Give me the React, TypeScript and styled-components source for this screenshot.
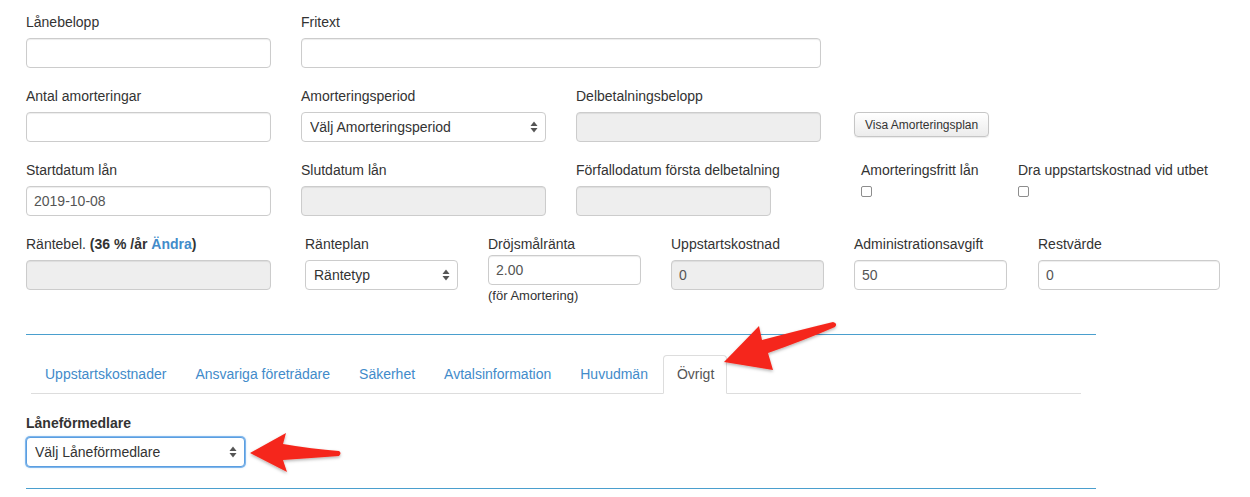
import React from 'react'
import styled, { createGlobalStyle, css } from 'styled-components'

const GlobalStyle = createGlobalStyle`
  body {
    margin: 0;
    background: #fff;
    font-family: "Liberation Sans", Arial, sans-serif;
    font-size: 14px;
    color: #333;
  }
`

const Page = styled.div`
  position: relative;
  width: 1250px;
  height: 497px;
  padding: 13px 0 0 26px;
  box-sizing: border-box;
  overflow: hidden;
`

const Row = styled.div`
  display: flex;
  align-items: flex-start;
  margin-bottom: 19px;
`

const Field = styled.div<{ $w?: number; $ml?: number }>`
  width: ${(p) => (p.$w ? `${p.$w}px` : 'auto')};
  margin-left: ${(p) => p.$ml || 0}px;
  flex-shrink: 0;
`

const Label = styled.div<{ $tight?: boolean }>`
  line-height: 18px;
  margin-bottom: ${(p) => (p.$tight ? 2 : 7)}px;
  white-space: nowrap;
`

const BoldLabel = styled(Label)`
  font-weight: 700;
  line-height: 17px;
  margin-bottom: 5px;
`

const Strong = styled.b`
  font-weight: 700;
`

const Link = styled.a`
  color: #428bca;
  font-weight: 700;
  text-decoration: none;
`

const controlBase = css`
  display: block;
  width: 100%;
  height: 30px;
  box-sizing: border-box;
  padding: 5px 7px;
  font-family: inherit;
  font-size: 14px;
  color: #555;
  background: #fff;
  border: 1px solid #ccc;
  border-radius: 4px;
  box-shadow: inset 0 1px 1px rgba(0, 0, 0, 0.075);
  outline: none;
`

const Input = styled.input`
  ${controlBase}
  &:disabled {
    background: #eee;
    color: #555;
  }
`

const SelectWrap = styled.div`
  position: relative;
`

const Select = styled.select<{ $focus?: boolean }>`
  ${controlBase}
  appearance: none;
  -webkit-appearance: none;
  padding-left: 8px;
  color: #333;
  box-shadow: none;
  ${(p) =>
    p.$focus &&
    css`
      border-color: #5b9ee0;
      box-shadow: 0 0 0 1px #7fb6ec, 0 0 3px rgba(102, 175, 233, 0.6);
    `}
`

const Chevron = styled.svg`
  position: absolute;
  right: 8px;
  top: 50%;
  margin-top: -6px;
  pointer-events: none;
`

const HelpText = styled.div`
  margin-top: 2px;
  font-size: 13px;
  line-height: 18px;
  color: #333;
`

const Button = styled.button`
  height: 25px;
  padding: 0 10px;
  font-family: inherit;
  font-size: 12px;
  color: #333;
  background: linear-gradient(#ffffff, #ececec);
  border: 1px solid #c6c6c6;
  border-radius: 4px;
  box-shadow: 0 1px 1px rgba(0, 0, 0, 0.08);
  white-space: nowrap;
`

const Check = styled.input.attrs({ type: 'checkbox' })`
  appearance: none;
  -webkit-appearance: none;
  display: block;
  width: 11px;
  height: 11px;
  margin: 4px 0 0 0;
  border: 1px solid #8d8d8d;
  border-radius: 2px;
  background: #fff;
`

const Rule = styled.div<{ $mt: number; $mb: number }>`
  width: 1070px;
  height: 1px;
  margin: ${(p) => p.$mt}px 0 ${(p) => p.$mb}px 0;
  background: #4a9fce;
`

const Tabs = styled.ul`
  display: flex;
  list-style: none;
  margin: 0 0 21px 5px;
  padding: 0;
  width: 1050px;
  border-bottom: 1px solid #ddd;
`

const Tab = styled.li<{ $active?: boolean }>`
  margin: 0 2px -1px 0;
  padding: 10px 12px 10px 13px;
  line-height: 17px;
  border: 1px solid transparent;
  border-radius: 4px 4px 0 0;
  color: #428bca;
  white-space: nowrap;
  ${(p) =>
    p.$active &&
    css`
      color: #555;
      background: #fff;
      border-color: #ddd;
      border-bottom-color: transparent;
    `}
`

const Overlay = styled.svg`
  position: absolute;
  left: 0;
  top: 0;
  pointer-events: none;
`

const SelectBox = ({ text, focus }: { text: string; focus?: boolean }) => (
  <SelectWrap>
    <Select $focus={focus} defaultValue="">
      <option value="">{text}</option>
    </Select>
    <Chevron width="8" height="12" viewBox="0 0 8 12">
      <path d="M4 0.5 L7.5 5 L0.5 5 Z" fill="#555" />
      <path d="M0.5 7 L7.5 7 L4 11.5 Z" fill="#555" />
    </Chevron>
  </SelectWrap>
)

const tabs = ['Uppstartskostnader', 'Ansvariga företrädare', 'Säkerhet', 'Avtalsinformation', 'Huvudmän', 'Övrigt']

const App = () => {
  return (
    <Page>
      <GlobalStyle />
      <Row>
        <Field $w={245}>
          <Label>Lånebelopp</Label>
          <Input />
        </Field>
        <Field $w={520} $ml={30}>
          <Label>Fritext</Label>
          <Input />
        </Field>
      </Row>

      <Row>
        <Field $w={245}>
          <Label>Antal amorteringar</Label>
          <Input />
        </Field>
        <Field $w={245} $ml={30}>
          <Label>Amorteringsperiod</Label>
          <SelectBox text="Välj Amorteringsperiod" />
        </Field>
        <Field $w={245} $ml={30}>
          <Label>Delbetalningsbelopp</Label>
          <Input disabled />
        </Field>
        <Field $ml={33}>
          <Label>&nbsp;</Label>
          <Button>Visa Amorteringsplan</Button>
        </Field>
      </Row>

      <Row>
        <Field $w={245}>
          <Label>Startdatum lån</Label>
          <Input defaultValue="2019-10-08" />
        </Field>
        <Field $w={245} $ml={30}>
          <Label>Slutdatum lån</Label>
          <Input disabled />
        </Field>
        <Field $w={195} $ml={30}>
          <Label>Förfallodatum första delbetalning</Label>
          <Input disabled />
        </Field>
        <Field $w={157} $ml={90}>
          <Label>Amorteringsfritt lån</Label>
          <Check />
        </Field>
        <Field>
          <Label>Dra uppstartskostnad vid utbet</Label>
          <Check />
        </Field>
      </Row>

      <Row>
        <Field $w={245}>
          <Label>
            Räntebel. <Strong>(36 % /år <Link>Ändra</Link>)</Strong>
          </Label>
          <Input disabled />
        </Field>
        <Field $w={153} $ml={34}>
          <Label>Ränteplan</Label>
          <SelectBox text="Räntetyp" />
        </Field>
        <Field $w={153} $ml={30}>
          <Label $tight>Dröjsmålränta</Label>
          <Input defaultValue="2.00" />
          <HelpText>(för Amortering)</HelpText>
        </Field>
        <Field $w={153} $ml={30}>
          <Label>Uppstartskostnad</Label>
          <Input disabled defaultValue="0" />
        </Field>
        <Field $w={153} $ml={30}>
          <Label>Administrationsavgift</Label>
          <Input defaultValue="50" />
        </Field>
        <Field $w={182} $ml={31}>
          <Label>Restvärde</Label>
          <Input defaultValue="0" />
        </Field>
      </Row>

      <Rule $mt={29} $mb={20} />

      <Tabs>
        {tabs.map((t) => (
          <Tab key={t} $active={t === 'Övrigt'}>
            {t}
          </Tab>
        ))}
      </Tabs>

      <Field $w={219}>
        <BoldLabel>Låneförmedlare</BoldLabel>
        <SelectBox text="Välj Låneförmedlare" focus />
      </Field>

      <Rule $mt={21} $mb={0} />

      <Overlay width="1250" height="497" viewBox="0 0 1250 497">
        <defs>
          <filter id="sh" x="-20%" y="-20%" width="140%" height="140%">
            <feDropShadow dx="0" dy="1.5" stdDeviation="1.5" floodColor="#000" floodOpacity="0.3" />
          </filter>
        </defs>
        <path
          d="M724 362 L759 326 L762 340 Q800 330 833 322 Q838 323 835 327 Q805 340 768 353 L773 370 Z"
          fill="#f5281c"
          filter="url(#sh)"
        />
        <path
          d="M250 453 L286 433 L283 444 Q312 449 339 451 Q342 453 339 456 Q312 458 283 460 L287 472 Z"
          fill="#f5281c"
          filter="url(#sh)"
        />
      </Overlay>
    </Page>
  )
}

export default App
